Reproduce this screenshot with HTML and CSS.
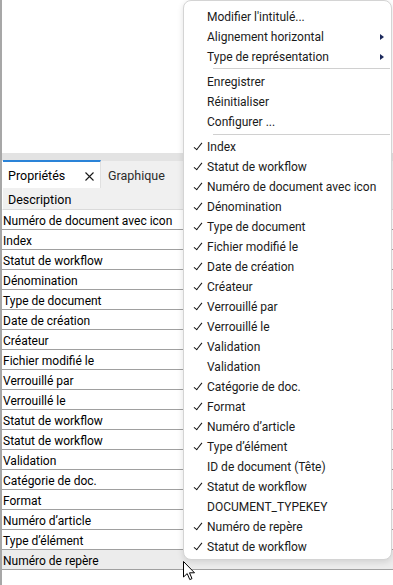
FILE: index.html
```html
<!DOCTYPE html>
<html>
<head>
  <title>Propriétés</title>
  <link rel="stylesheet" href="styles.css">
</head>
<body>
  <div class="window">
    <div class="top-pane"></div>
    <div class="splitter"></div>

    <div class="tabs">
      <div class="tab active">Propriétés
        <svg class="tab-close" width="9" height="9" viewBox="0 0 9 9"><path d="M0.5 0.5 L8.5 8.5 M8.5 0.5 L0.5 8.5" stroke="#1a1a1a" stroke-width="1.1"/></svg>
      </div>
      <div class="tab">Graphique</div>
    </div>

    <div class="grid">
      <div class="grid-head">Description</div>
      <div class="grid-row">Numéro de document avec icon</div>
      <div class="grid-row">Index</div>
      <div class="grid-row">Statut de workflow</div>
      <div class="grid-row">Dénomination</div>
      <div class="grid-row">Type de document</div>
      <div class="grid-row">Date de création</div>
      <div class="grid-row">Créateur</div>
      <div class="grid-row">Fichier modifié le</div>
      <div class="grid-row">Verrouillé par</div>
      <div class="grid-row">Verrouillé le</div>
      <div class="grid-row">Statut de workflow</div>
      <div class="grid-row">Statut de workflow</div>
      <div class="grid-row">Validation</div>
      <div class="grid-row">Catégorie de doc.</div>
      <div class="grid-row">Format</div>
      <div class="grid-row">Numéro d’article</div>
      <div class="grid-row">Type d’élément</div>
      <div class="grid-row hover">Numéro de repère</div>
    </div>
  </div>

  <!-- context menu over the grid -->
  <div class="menu">
    <div class="menu-item">Modifier l'intitulé...</div>
    <div class="menu-item sub">Alignement horizontal</div>
    <div class="menu-item sub">Type de représentation</div>
    <div class="menu-sep"></div>
    <div class="menu-item">Enregistrer</div>
    <div class="menu-item">Réinitialiser</div>
    <div class="menu-item">Configurer ...</div>
    <div class="menu-sep"></div>
    <div class="menu-item checked">Index</div>
    <div class="menu-item checked">Statut de workflow</div>
    <div class="menu-item checked">Numéro de document avec icon</div>
    <div class="menu-item checked">Dénomination</div>
    <div class="menu-item checked">Type de document</div>
    <div class="menu-item checked">Fichier modifié le</div>
    <div class="menu-item checked">Date de création</div>
    <div class="menu-item checked">Créateur</div>
    <div class="menu-item checked">Verrouillé par</div>
    <div class="menu-item checked">Verrouillé le</div>
    <div class="menu-item checked">Validation</div>
    <div class="menu-item">Validation</div>
    <div class="menu-item checked">Catégorie de doc.</div>
    <div class="menu-item checked">Format</div>
    <div class="menu-item checked">Numéro d’article</div>
    <div class="menu-item checked">Type d’élément</div>
    <div class="menu-item">ID de document (Tête)</div>
    <div class="menu-item checked">Statut de workflow</div>
    <div class="menu-item">DOCUMENT_TYPEKEY</div>
    <div class="menu-item checked">Numéro de repère</div>
    <div class="menu-item checked">Statut de workflow</div>
  </div>

  <svg class="cursor" width="13" height="20" viewBox="0 0 13 20">
    <path d="M0.5 0.5 L0.5 16 L4.2 12.6 L6.8 18.6 L9 17.6 L6.5 11.8 L11.5 11.8 Z" fill="#fff" stroke="#000" stroke-width="1"/>
  </svg>
</body>
</html>
```

FILE: styles.css
```css
body {
  margin: 0;
  font-family: Roboto, 'Noto Sans', sans-serif;
  font-size: 12px;
  color: #000;
  background: #fff;
  width: 393px;
  height: 585px;
  overflow: hidden;
  position: relative;
}

.window {
  border-left: 2px solid #a7a7a7;
  height: 585px;
  box-sizing: border-box;
}

.top-pane {
  height: 153px;
  background: #fff;
}

.splitter {
  height: 8px;
  background: #e3e3e3;
}

.tabs {
  display: flex;
  height: 27px;
  background: #f0f0f0;
  border-left: 1px solid #fff;
}

.tab {
  display: flex;
  align-items: center;
  padding: 1px 7px 0;
  color: #2b2b2b;
  font-size: 12.5px;
}

.tab.active {
  width: 86px;
  background: #fff;
  border-top: 2px solid #2a83d8;
  border-right: 1px solid #e0e0e0;
  color: #000;
  justify-content: space-between;
  padding: 1px 6px 0 5px;
  margin-top: -1px;
}

.tab-close {
  margin-top: 1px;
}

.grid {
  display: flex;
  flex-direction: column;
}

.grid-head {
  height: 22px;
  line-height: 23px;
  padding-left: 5px;
  background: #f0f0f0;
  border-left: 1px solid #fff;
  box-sizing: border-box;
  border-bottom: 1px solid #dadada;
  font-size: 12.5px;
}

.grid-row {
  height: 20px;
  line-height: 22px;
  padding-left: 1px;
  box-sizing: border-box;
  border-bottom: 1px solid #a0a0a0;
  font-size: 12px;
}

.grid-row.hover {
  background: #ececec;
}

.menu {
  position: absolute;
  left: 183px;
  top: 0;
  width: 209px;
  height: 560px;
  box-sizing: border-box;
  background: #fff;
  border: 1px solid #d4d4d4;
  border-radius: 8px;
  box-shadow: 0 2px 6px rgba(0,0,0,0.12);
  padding-top: 6px;
  color: #1a1a1a;
  font-size: 12px;
}

.menu-item {
  height: 20px;
  line-height: 20px;
  padding-left: 23px;
  position: relative;
}

.menu-item.sub::after {
  content: '';
  position: absolute;
  right: 7px;
  top: 7px;
  border-left: 4px solid #1c2a5c;
  border-top: 3.5px solid transparent;
  border-bottom: 3.5px solid transparent;
}

.menu-item.checked::before {
  content: '';
  position: absolute;
  left: 12px;
  top: 4px;
  width: 3px;
  height: 8px;
  border-right: 1.7px solid #111;
  border-bottom: 1.7px solid #111;
  transform: rotate(38deg);
  transform-origin: center;
}

.menu-sep {
  height: 1px;
  background: #d0d0d0;
  margin: 1px 1px 3px 29px;
}

.menu-sep + .menu-item + .menu-item + .menu-item + .menu-sep {
  margin: 2px 1px 2px 29px;
}

.cursor {
  position: absolute;
  left: 183px;
  top: 561px;
}
```
